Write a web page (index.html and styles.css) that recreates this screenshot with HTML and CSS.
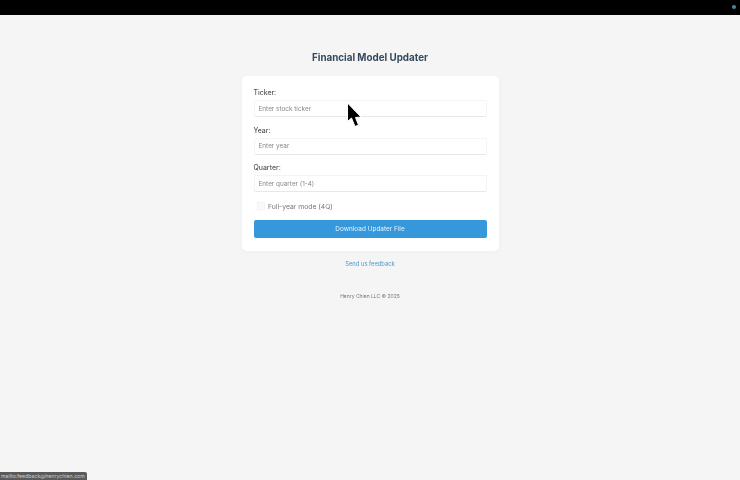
FILE: index.html
```html
<!DOCTYPE html>
<html lang="en">
<head>
    <meta charset="UTF-8">
    <meta name="viewport" content="width=device-width, initial-scale=1.0">
    <title>Financial Model Updater</title>
    <link rel="stylesheet" href="styles.css">
</head>
<body>
    <div class="top-bar"><span class="top-dot"></span></div>

    <main class="page">
        <h1>Financial Model Updater</h1>

        <form class="card">
            <div class="form-group">
                <label for="ticker">Ticker:</label>
                <input type="text" id="ticker" placeholder="Enter stock ticker">
            </div>
            <div class="form-group">
                <label for="year">Year:</label>
                <input type="text" id="year" placeholder="Enter year">
            </div>
            <div class="form-group">
                <label for="quarter">Quarter:</label>
                <input type="text" id="quarter" placeholder="Enter quarter (1-4)">
            </div>
            <div class="check-row">
                <span class="check-box"></span>
                <span>Full-year mode (4Q)</span>
            </div>
            <button type="button">Download Updater File</button>
        </form>

        <a class="feedback" href="#">Send us feedback</a>
        <p class="footer">Henry Chien LLC © 2025</p>
    </main>

    <svg class="cursor" width="18" height="26" viewBox="0 0 18 26">
        <path d="M1.5 1 L1.5 19.5 L5.5 16 L9 24.5 L12.5 23 L9.5 15.5 L15 15 Z" fill="#000" stroke="#fff" stroke-width="1"/>
    </svg>

    <div class="status-tip">mailto:feedback@henrychien.com</div>
</body>
</html>
```

FILE: styles.css
```css
* {
    box-sizing: border-box;
}
html, body {
    height: 100%;
}
body {
    margin: 0;
    background-color: #f5f5f5;
    font-family: Inter, "Liberation Sans", sans-serif;
    overflow: hidden;
}
.top-bar {
    height: 15px;
    background-color: #000;
    display: flex;
    justify-content: flex-end;
    align-items: center;
    padding-right: 4px;
}
.top-dot {
    width: 4px;
    height: 4px;
    margin-top: -1px;
    border-radius: 50%;
    background-color: #4a86a8;
}
.page {
    display: flex;
    flex-direction: column;
    align-items: center;
    filter: blur(0.4px);
}
h1 {
    margin: 36px 0 11px;
    font-size: 9.8px;
    line-height: 14px;
    font-weight: 700;
    color: #34495e;
}
.card {
    width: 257px;
    height: 175px;
    padding: 12px;
    background-color: #fff;
    border-radius: 5px;
    box-shadow: 0 1px 5px rgba(0, 0, 0, 0.03);
}
.form-group {
    height: 37.5px;
}
label {
    display: block;
    height: 12px;
    font-size: 6.9px;
    line-height: 9px;
    font-weight: 500;
    color: #555;
}
input {
    display: block;
    width: 100%;
    height: 17px;
    padding: 0 4px;
    font-family: inherit;
    font-size: 6.4px;
    background-color: #fff;
    border: 1px solid #f4f4f4;
    border-bottom-color: #e8e8e8;
    border-radius: 2px;
    outline: none;
}
input::placeholder {
    color: #888;
}
.check-row {
    display: flex;
    align-items: center;
    gap: 3.5px;
    height: 11px;
    padding-left: 3px;
    font-size: 6.8px;
    color: #777;
}
.check-box {
    width: 8px;
    height: 8px;
    background-color: #fafafa;
    border: 1px solid #f3f3f3;
    border-radius: 1px;
}
button {
    display: block;
    width: 100%;
    height: 18px;
    margin-top: 8.5px;
    padding: 0;
    font-family: inherit;
    font-size: 6.45px;
    color: #e8f4fb;
    background-color: #3498db;
    border: none;
    border-radius: 2px;
}
.feedback {
    margin-top: 9px;
    font-size: 5.8px;
    line-height: 8px;
    color: #4a9cc7;
    text-decoration: none;
}
.footer {
    margin: 24px 0 0;
    font-size: 5px;
    line-height: 8px;
    color: #777;
}
.cursor {
    position: absolute;
    left: 346px;
    top: 102px;
}
.status-tip {
    position: absolute;
    left: 0;
    bottom: 0;
    height: 8px;
    padding: 0 2px 0 1px;
    font-size: 5.2px;
    line-height: 8px;
    color: #ccc;
    background-color: #5a5a5a;
    border-top-right-radius: 2px;
}
```
